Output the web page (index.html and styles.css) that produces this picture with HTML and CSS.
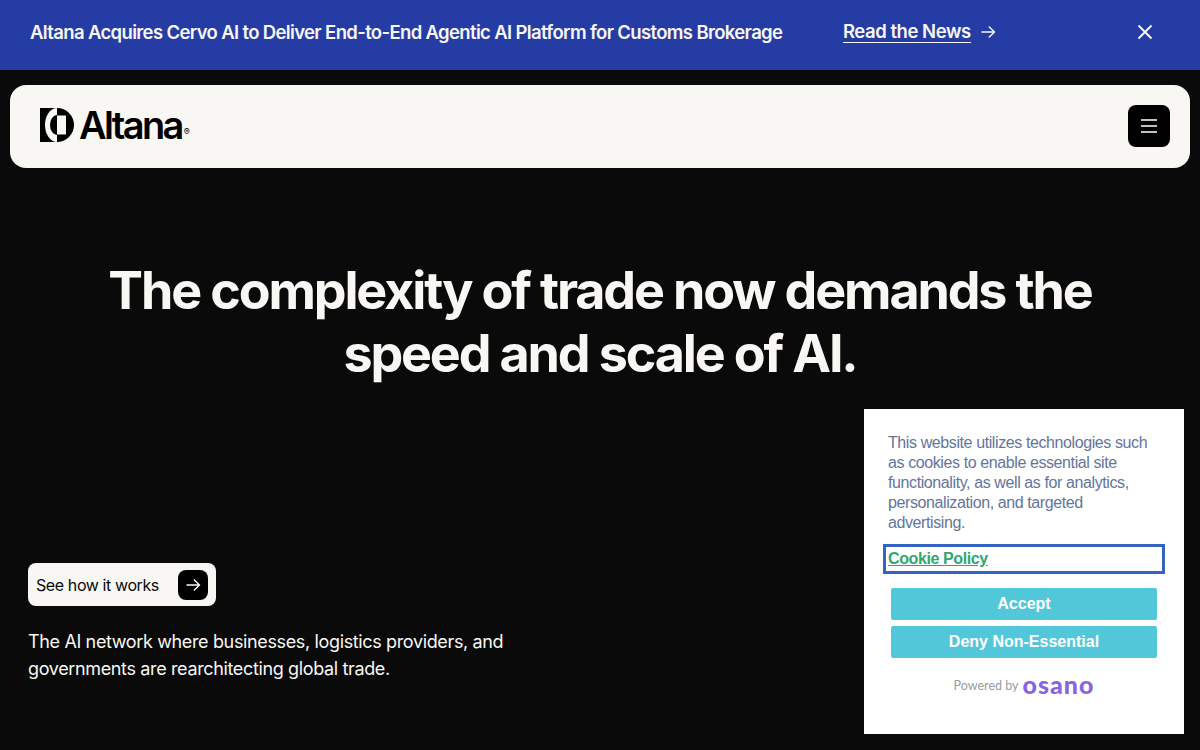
FILE: index.html
```html
<!DOCTYPE html>
<html lang="en">
<head>
    <meta charset="UTF-8">
    <title>Altana</title>
    <link rel="stylesheet" href="styles.css">
</head>
<body>

    <div class="banner">
        <p class="banner-text">Altana Acquires Cervo AI to Deliver End-to-End Agentic AI Platform for Customs Brokerage</p>
        <a class="banner-link" href="#"><span>Read the News</span>
            <svg width="16" height="16" viewBox="0 0 16 16" fill="none" stroke="#f8f7f3" stroke-width="1.4"><path d="M1.5 8H14.5M8.8 2.5L14.5 8L8.8 13.5"/></svg>
        </a>
        <button class="banner-close" aria-label="Close">
            <svg width="16" height="16" viewBox="0 0 16 16" fill="none" stroke="#fff" stroke-width="1.8"><path d="M1.5 1.5L14.5 14.5M14.5 1.5L1.5 14.5"/></svg>
        </button>
    </div>

    <nav class="nav">
        <a class="logo" href="#">
            <svg width="34" height="34" viewBox="0 0 34 34">
                <rect width="17" height="34" fill="#000"/>
                <ellipse cx="17" cy="17" rx="12" ry="17" fill="#f8f7f3"/>
                <path d="M17 7A7 10 0 0 0 17 27Z" fill="#000"/>
                <path d="M17 0A17 17 0 0 1 17 34V26.5H26V7.5H17Z" fill="#000"/>
            </svg>
            <span class="logo-word">Altana</span><span class="logo-reg">®</span>
        </a>
        <button class="menu-btn" aria-label="Menu">
            <svg width="16" height="14" viewBox="0 0 16 14" stroke="#fff" stroke-width="1.5"><path d="M0 1H16M0 7H16M0 13H16"/></svg>
        </button>
    </nav>

    <main class="hero">
        <h1>The complexity of trade now demands the<br>speed and scale of AI.</h1>
        <div class="hero-bottom">
            <a class="cta" href="#">See how it works
                <span class="cta-icon">
                    <svg width="16" height="16" viewBox="0 0 16 16" fill="none" stroke="#f8f7f3" stroke-width="1.4"><path d="M1.5 8H14.5M8.8 2.5L14.5 8L8.8 13.5"/></svg>
                </span>
            </a>
            <p class="lede">The AI network where businesses, logistics providers, and governments are rearchitecting global trade.</p>
        </div>
    </main>

    <div class="cookie">
        <p class="cookie-text">This website utilizes technologies such as cookies to enable essential site functionality, as well as for analytics, personalization, and targeted advertising.</p>
        <a class="cookie-link" href="#">Cookie Policy</a>
        <button class="cookie-btn">Accept</button>
        <button class="cookie-btn">Deny Non-Essential</button>
        <div class="powered"><span>Powered by</span><span class="osano">osano</span></div>
    </div>

</body>
</html>
```

FILE: styles.css
```css
* {
    box-sizing: border-box;
}

html, body {
    height: 750px;
    overflow: hidden;
}

body {
    margin: 0;
    background-color: #0a0a0a;
    color: #f8f7f3;
    font-family: Inter, "Liberation Sans", sans-serif;
}

a {
    color: inherit;
    text-decoration: none;
}

button {
    border: none;
    padding: 0;
    font-family: inherit;
}

/* top banner */
.banner {
    height: 70px;
    padding: 0 47px 6px 30px;
    display: flex;
    align-items: center;
    background-color: #263ca5;
}

.banner-text {
    margin: 0;
    width: 813px;
    font-size: 18.5px;
    font-weight: 600;
    letter-spacing: -0.035em;
    white-space: nowrap;
}

.banner-link {
    display: flex;
    align-items: center;
    gap: 9px;
    font-size: 18.5px;
    font-weight: 600;
    letter-spacing: -0.025em;
}

.banner-link span {
    border-bottom: 1px solid #f8f7f3;
    line-height: 21px;
}

.banner-close {
    margin-left: auto;
    display: flex;
    background: none;
}

/* nav */
.nav {
    height: 83px;
    margin: 15px 10px 0;
    padding: 0 20px 2px 30px;
    display: flex;
    align-items: center;
    justify-content: space-between;
    background-color: #f8f7f3;
    border-radius: 16px;
}

.logo {
    display: flex;
    align-items: center;
    margin-bottom: 1px;
    color: #000;
}

.logo-word {
    margin-left: 5px;
    font-size: 38px;
    font-weight: 600;
    letter-spacing: -0.07em;
    line-height: 34px;
}

.logo-reg {
    margin: 14px 0 0 2px;
    font-size: 9px;
    line-height: 10px;
}

.menu-btn {
    width: 42px;
    height: 42px;
    display: flex;
    align-items: center;
    justify-content: center;
    background-color: #000;
    border-radius: 8px;
}

/* hero */
.hero {
    height: 582px;
    padding: 91px 28px 0;
    display: flex;
    flex-direction: column;
}

.hero h1 {
    margin: 0;
    font-size: 52px;
    font-weight: 700;
    line-height: 63px;
    letter-spacing: -0.041em;
    text-align: center;
    color: #f8f7f3;
}

.hero-bottom {
    margin-top: 178px;
    width: 490px;
}

.cta {
    width: 188px;
    height: 43px;
    padding: 0 8px;
    display: flex;
    align-items: center;
    justify-content: space-between;
    background-color: #f8f7f3;
    border-radius: 8px;
    color: #0a0a0a;
    font-size: 16px;
    line-height: 18px;
    letter-spacing: -0.025em;
}

.cta-icon {
    width: 30px;
    height: 30px;
    display: flex;
    align-items: center;
    justify-content: center;
    background-color: #000;
    border-radius: 8px;
}

.lede {
    margin: 22px 0 0;
    font-size: 18px;
    line-height: 27px;
    letter-spacing: -0.02em;
}

/* cookie dialog */
.cookie {
    position: fixed;
    right: 16px;
    bottom: 16px;
    width: 320px;
    height: 325px;
    padding: 24px 24px 0;
    display: flex;
    flex-direction: column;
    background-color: #fff;
    font-family: "Liberation Sans", Arial, sans-serif;
    font-size: 16px;
    line-height: 20px;
}

.cookie-text {
    margin: 0;
    color: #64759b;
    letter-spacing: -0.025em;
}

.cookie-link {
    margin: 11px -5px 0;
    height: 30px;
    padding: 2px 2px 0;
    border: 3px solid #3565c4;
    color: #2fa86f;
    font-weight: 700;
    letter-spacing: -0.025em;
    text-decoration: underline;
}

.cookie-btn {
    height: 32px;
    margin: 0 3px 6px;
    background-color: #53c7da;
    border-radius: 2px;
    color: #fff;
    font-family: inherit;
    font-size: 16px;
    font-weight: 700;
}

.cookie-link + .cookie-btn {
    margin-top: 14px;
}

.powered {
    margin-top: 10px;
    display: flex;
    align-items: center;
    justify-content: center;
    gap: 4px;
    font-family: Lato, sans-serif;
    font-size: 12.5px;
    color: #9b9aa3;
}

.powered span:first-child {
    margin-top: 2px;
}

.osano {
    margin-top: -2px;
    font-size: 25px;
    font-weight: 900;
    line-height: 16px;
    letter-spacing: 0.04em;
    color: #8a63e0;
}
```
